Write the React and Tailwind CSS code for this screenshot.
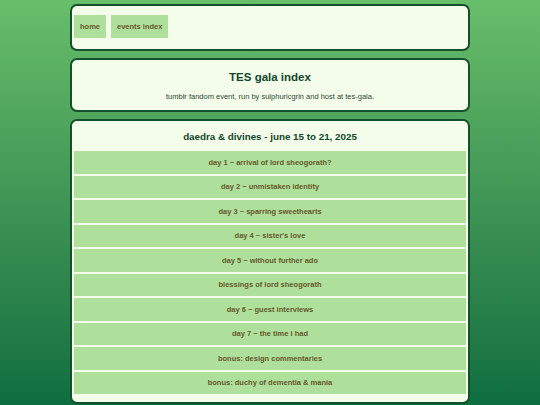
const days = [
    "day 1 ~ arrival of lord sheogorath?",
    "day 2 ~ unmistaken identity",
    "day 3 ~ sparring sweethearts",
    "day 4 ~ sister's love",
    "day 5 ~ without further ado",
    "blessings of lord sheogorath",
    "day 6 ~ guest interviews",
    "day 7 ~ the time i had",
    "bonus: design commentaries",
    "bonus: duchy of dementia & mania",
]

function App() {
    const card = "w-[400px] mx-auto bg-[#f4fdea] border-2 border-[#14502c] rounded-[7px]"
    const navBtn = "h-[23px] px-[6px] flex items-center bg-[#aee09c] text-[#66582b] font-bold text-[7.5px]"

    return (
        <div className="h-[405px] overflow-hidden bg-gradient-to-b from-[#68be6a] to-[#0c6e40] pt-[4px] flex flex-col gap-[7px]"
            style={{ fontFamily: '"Liberation Sans", Arial, sans-serif' }}>
            <nav className={card + " h-[47px] shrink-0 px-[2px] pt-[9px]"}>
                <div className="flex gap-[5px]">
                    <a className={navBtn}>home</a>
                    <a className={navBtn}>events index</a>
                </div>
            </nav>

            <div className={card + " h-[54px] shrink-0 flex flex-col items-center pt-[9px]"}>
                <h1 className="text-[11.5px] font-bold text-[#11462a] leading-[16px]">TES gala index</h1>
                <p className="text-[7.5px] text-[#2d4636] mt-[6px]">tumblr fandom event, run by sulphuricgrin and host at tes-gala.</p>
            </div>

            <div className={card + " shrink-0 px-[2px] pb-[8px]"}>
                <h2 className="text-center text-[9.8px] font-bold text-[#11462a] pt-[9px] h-[30px] leading-[14px]">daedra &amp; divines - june 15 to 21, 2025</h2>
                <div className="flex flex-col gap-[2px]">
                    {days.map(item => {
                        return (
                            <div key={item} className="h-[22.5px] flex items-center justify-center bg-[#aee09c] text-[#66582b] font-bold text-[7.5px]">{item}</div>
                        )
                    })}
                </div>
            </div>
        </div>
    );
}

export default App;
